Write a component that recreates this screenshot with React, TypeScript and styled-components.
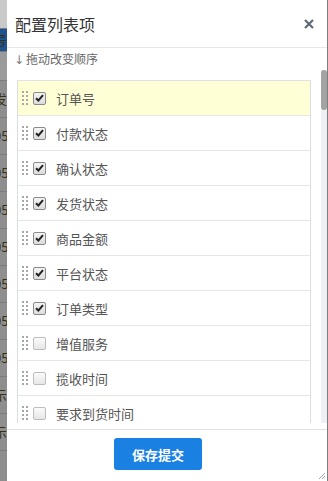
import styled, { createGlobalStyle } from 'styled-components';

const GlobalStyle = createGlobalStyle`
  html, body {
    margin: 0;
    padding: 0;
    background: #fff;
    font-family: "Noto Sans CJK SC", "Noto Sans", sans-serif;
  }
`;

const Screen = styled.div`
  display: flex;
  width: 328px;
  height: 481px;
  overflow: hidden;
`;

const Backdrop = styled.div`
  width: 7px;
  flex-shrink: 0;
  display: flex;
  flex-direction: column;
  overflow: hidden;
  background: #8f8f8f;
`;

const BackdropRow = styled.div<{ $tone: string; $h: number }>`
  height: ${(p) => p.$h}px;
  flex-shrink: 0;
  background: ${(p) => p.$tone};
  border-bottom: 1px solid #7a7a7a;
  font-size: 13px;
  line-height: ${(p) => p.$h}px;
  color: #3a3010;
  white-space: nowrap;
  text-indent: -6px;
`;

const Modal = styled.div`
  flex: 1;
  display: flex;
  flex-direction: column;
  background: #fff;
  border-right: 1px solid #7d7d7d;
`;

const Header = styled.div`
  height: 47px;
  display: flex;
  align-items: center;
  justify-content: space-between;
  padding: 0 12px 0 8px;
  border-bottom: 1px solid #e7e7e7;
`;

const Title = styled.h4`
  margin: 0;
  font-size: 16px;
  font-weight: 400;
  color: #333;
`;

const Close = styled.button`
  border: none;
  background: none;
  padding: 0;
  width: 12px;
  height: 12px;
  display: flex;
  cursor: pointer;
`;

const Hint = styled.div`
  height: 21px;
  padding: 1px 0 0 7px;
  font-size: 12px;
  line-height: 20px;
  color: #666;
`;

const Arrow = styled.span`
  font-family: "DejaVu Sans", sans-serif;
  color: #7a7a7a;
  margin-right: 2px;
`;

const ScrollArea = styled.div`
  height: 353px;
  display: flex;
  padding-left: 10px;
`;

const ListClip = styled.div`
  width: 294px;
  padding-top: 10px;
  overflow: hidden;
`;

const List = styled.ul`
  list-style: none;
  margin: 0;
  padding: 0;
  border: 1px solid #d9dee4;
  border-top-color: #dfe3e8;
`;

const Item = styled.li<{ $active?: boolean }>`
  height: 34px;
  display: flex;
  align-items: center;
  padding-left: 4px;
  border-bottom: 1px solid #e6e6e6;
  background: ${(p) => (p.$active ? '#ffffd6' : '#fff')};
  font-size: 13px;
  color: #555;
`;

const Handle = styled.svg`
  width: 6px;
  height: 14px;
  margin-right: 5px;
  flex-shrink: 0;
`;

const Box = styled.span<{ $checked: boolean }>`
  width: 11px;
  height: 11px;
  flex-shrink: 0;
  display: flex;
  align-items: center;
  justify-content: center;
  border: 1px solid ${(p) => (p.$checked ? '#8a8a8a' : '#bdbdbd')};
  border-radius: 2px;
  background: ${(p) => (p.$checked ? 'linear-gradient(#f4f4f4, #dcdcdc)' : 'linear-gradient(#fbfbfb, #e6e6e6)')};
  margin-right: 10px;
`;

const Gutter = styled.div`
  width: 10px;
  flex-shrink: 0;
`;

const Track = styled.div`
  width: 6px;
  flex-shrink: 0;
  background: #edf0f4;
  display: flex;
  flex-direction: column;
`;

const Thumb = styled.div`
  height: 40px;
  border-radius: 3px;
  background: #a3a3a3;
`;

const Footer = styled.div`
  margin-top: 6px;
  flex: 1;
  border-top: 1px solid #e0e0e0;
  padding: 8px 0 0 107px;
  position: relative;
`;

const SaveButton = styled.button`
  width: 88px;
  height: 32px;
  border: none;
  border-radius: 3px;
  background: #1a80e2;
  color: #fff;
  font-family: inherit;
  font-size: 13px;
  font-weight: 700;
  cursor: pointer;
`;

const Grip = styled.svg`
  position: absolute;
  right: 1px;
  bottom: 1px;
  width: 8px;
  height: 8px;
`;

const columns = [
  { name: '订单号', checked: true },
  { name: '付款状态', checked: true },
  { name: '确认状态', checked: true },
  { name: '发货状态', checked: true },
  { name: '商品金额', checked: true },
  { name: '平台状态', checked: true },
  { name: '订单类型', checked: true },
  { name: '增值服务', checked: false },
  { name: '揽收时间', checked: false },
  { name: '要求到货时间', checked: false },
  { name: '发货时间', checked: false },
];

const backdrop = [
  { tone: '#c9c9c9', h: 28, text: '' },
  { tone: '#1d5390', h: 22, text: '号' },
  { tone: '#9b9b9b', h: 28, text: '' },
  { tone: '#8e8e8e', h: 36, text: '发' },
  { tone: '#8e8e8e', h: 36, text: '05' },
  { tone: '#8e8e8e', h: 36, text: '05' },
  { tone: '#8e8e8e', h: 36, text: '05' },
  { tone: '#8e8e8e', h: 36, text: '05' },
  { tone: '#8e8e8e', h: 36, text: '05' },
  { tone: '#8e8e8e', h: 36, text: '05' },
  { tone: '#8e8e8e', h: 36, text: '05' },
  { tone: '#8e8e8e', h: 36, text: '示' },
  { tone: '#8e8e8e', h: 36, text: '示' },
  { tone: '#8e8e8e', h: 36, text: '' },
];

function DragDots() {
  const dots = [];
  for (let r = 0; r < 4; r++) {
    for (let c = 0; c < 2; c++) {
      dots.push(<rect key={`${r}-${c}`} x={c * 4} y={r * 4} width="2" height="2" fill="#a8a8a8" />);
    }
  }
  return <Handle viewBox="0 0 6 14">{dots}</Handle>;
}

function Check({ checked }: { checked: boolean }) {
  return (
    <Box $checked={checked}>
      {checked && (
        <svg width="9" height="8" viewBox="0 0 9 8">
          <path d="M1 4.2 L3.4 6.5 L8 1.2" stroke="#222" strokeWidth="2" fill="none" />
        </svg>
      )}
    </Box>
  );
}

export default function App() {
  return (
    <Screen>
      <GlobalStyle />
      <Backdrop>
        {backdrop.map((b, i) => (
          <BackdropRow key={i} $tone={b.tone} $h={b.h}>
            {b.text}
          </BackdropRow>
        ))}
      </Backdrop>
      <Modal>
        <Header>
          <Title>配置列表项</Title>
          <Close aria-label="关闭">
            <svg width="12" height="12" viewBox="0 0 12 12">
              <path d="M2 2 L10 10 M10 2 L2 10" stroke="#5e6a78" strokeWidth="2.2" />
            </svg>
          </Close>
        </Header>
        <Hint>
          <Arrow>↓</Arrow>拖动改变顺序
        </Hint>
        <ScrollArea>
          <ListClip>
            <List>
              {columns.map((col, i) => (
                <Item key={col.name} $active={i === 0}>
                  <DragDots />
                  <Check checked={col.checked} />
                  {col.name}
                </Item>
              ))}
            </List>
          </ListClip>
          <Gutter />
          <Track>
            <Thumb />
          </Track>
        </ScrollArea>
        <Footer>
          <SaveButton>保存提交</SaveButton>
          <Grip viewBox="0 0 8 8">
            <path d="M7 1 L1 7 M7 4 L4 7 M7 6.5 L6.5 7" stroke="#9aa3b0" strokeWidth="1" />
          </Grip>
        </Footer>
      </Modal>
    </Screen>
  );
}
